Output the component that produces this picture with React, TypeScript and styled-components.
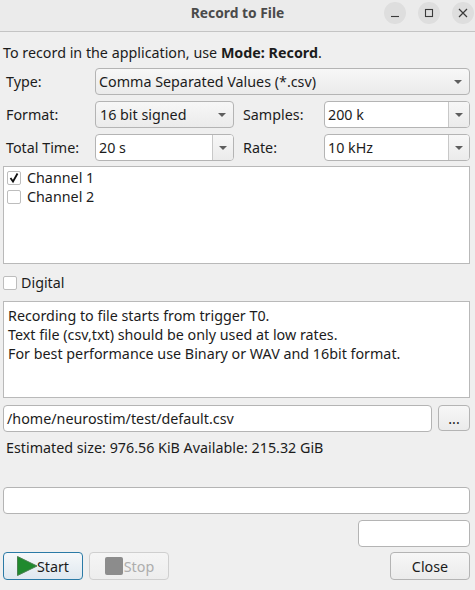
import React from 'react'
import styled, { createGlobalStyle } from 'styled-components'

const Global = createGlobalStyle`
  html, body { margin: 0; padding: 0; background: #efefef; }
  body {
    font-family: "Noto Sans", "DejaVu Sans", sans-serif;
    font-size: 14.3px;
    color: #1c1c1c;
  }
`

const Window = styled.div`
  width: 475px;
  height: 590px;
  overflow: hidden;
  background: #efefef;
`

const TitleBar = styled.header`
  height: 29px;
  border-bottom: 1px solid #c4c4c4;
  background: #ebebeb;
  display: flex;
  align-items: flex-start;
  justify-content: flex-end;
  gap: 12px;
  padding: 2px 1px 0 0;
  position: relative;
`

const Title = styled.div`
  position: absolute;
  left: 0;
  right: 0;
  top: 4px;
  text-align: center;
  font-weight: 700;
  font-size: 13.8px;
  line-height: 18px;
  color: #4a4a4a;
`

const WinButton = styled.div`
  width: 22px;
  height: 22px;
  border-radius: 50%;
  background: #dedede;
  display: flex;
  align-items: center;
  justify-content: center;
`

const Body = styled.main`
  display: flex;
  flex-direction: column;
  padding: 0 5px 0 3px;
`

const Intro = styled.div`
  height: 36px;
  line-height: 42px;
  white-space: nowrap;
`

const Rows = styled.div`
  display: grid;
  grid-template-columns: 89px 139px 90px 146px;
  grid-auto-rows: 27px;
  row-gap: 6px;
  align-items: stretch;
  padding-left: 3px;
`

const Label = styled.label<{ $indent?: number }>`
  display: flex;
  align-items: center;
  padding-left: ${p => p.$indent ?? 0}px;
`

const controlEdge = `
  box-sizing: border-box;
  border: 1px solid #b4b4b4;
  border-radius: 4px;
`

const Select = styled.div<{ $wide?: boolean }>`
  ${controlEdge}
  grid-column: ${p => (p.$wide ? 'span 3' : 'auto')};
  background: linear-gradient(#f7f7f7, #ebebeb);
  display: flex;
  align-items: center;
  justify-content: space-between;
  padding: 0 7px 0 ${p => (p.$wide ? 3 : 4)}px;
`

const Combo = styled.div`
  ${controlEdge}
  background: #fff;
  display: flex;
  align-items: center;
  justify-content: space-between;
  padding-left: 3px;
`

const ComboArrow = styled.div`
  width: 20px;
  align-self: stretch;
  border-left: 1px solid #c8c8c8;
  border-radius: 0 3px 3px 0;
  background: linear-gradient(#f7f7f7, #ebebeb);
  display: flex;
  align-items: center;
  justify-content: center;
`

const Arrow = styled.span`
  width: 0;
  height: 0;
  border-left: 4px solid transparent;
  border-right: 4px solid transparent;
  border-top: 4px solid #5e5e5e;
`

const ChannelList = styled.div`
  box-sizing: border-box;
  height: 98px;
  margin-top: 5px;
  border: 1px solid #b9b9b9;
  background: #fff;
  padding: 1px 3px;
`

const Channel = styled.div`
  display: flex;
  align-items: center;
  gap: 6px;
  height: 19px;
`

const Box = styled.span`
  box-sizing: border-box;
  width: 14px;
  height: 14px;
  border: 1px solid #bdbdbd;
  border-radius: 2px;
  background: #fff;
  display: flex;
  align-items: center;
  justify-content: center;
`

const DigitalRow = styled.div`
  display: flex;
  align-items: center;
  gap: 4px;
  height: 37px;
`

const Notes = styled.div`
  box-sizing: border-box;
  height: 97px;
  border: 1px solid #b9b9b9;
  background: #fff;
  padding: 4px;
  line-height: 19px;
`

const PathRow = styled.div`
  display: flex;
  justify-content: space-between;
  margin-top: 7px;
`

const TextInput = styled.div<{ $width?: number }>`
  ${controlEdge}
  width: ${p => (p.$width ? `${p.$width}px` : '100%')};
  height: 27px;
  background: #fff;
  line-height: 25px;
  padding-left: 3px;
  white-space: nowrap;
`

const SmallButton = styled.div`
  ${controlEdge}
  width: 32px;
  height: 26px;
  background: linear-gradient(#f7f7f7, #ebebeb);
  text-align: center;
  line-height: 25px;
`

const Estimate = styled.div`
  height: 55px;
  line-height: 32px;
  padding-left: 3px;
`

const RightAligned = styled.div`
  display: flex;
  justify-content: flex-end;
  margin-top: 6px;
`

const Footer = styled.footer`
  display: flex;
  align-items: center;
  gap: 6px;
  margin-top: 5px;
`

const Button = styled.div<{ $focus?: boolean; $off?: boolean }>`
  ${controlEdge}
  width: 80px;
  height: 28px;
  display: flex;
  align-items: center;
  justify-content: center;
  border-color: ${p => (p.$focus ? '#2a7aa6' : p.$off ? '#cfcfcf' : '#b4b4b4')};
  background: ${p =>
    p.$focus
      ? 'linear-gradient(#f6f8fa, #dfe8ef)'
      : p.$off
        ? 'linear-gradient(#f5f5f5, #ededed)'
        : 'linear-gradient(#f7f7f7, #ebebeb)'};
  color: ${p => (p.$off ? '#adadad' : 'inherit')};
`

const Spacer = styled.div`
  flex: 1;
`

export default function App() {
  return (
    <Window>
      <Global />
      <TitleBar>
        <Title>Record to File</Title>
        <WinButton>
          <svg width="10" height="10" viewBox="0 0 10 10">
            <path d="M1 8.5h8" stroke="#3a3a3a" strokeWidth="1.1" />
          </svg>
        </WinButton>
        <WinButton>
          <svg width="10" height="10" viewBox="0 0 10 10">
            <rect x="1.5" y="1.5" width="7" height="7" fill="none" stroke="#3a3a3a" strokeWidth="1.1" />
          </svg>
        </WinButton>
        <WinButton>
          <svg width="10" height="10" viewBox="0 0 10 10">
            <path d="M1 1l8 8M9 1l-8 8" stroke="#3a3a3a" strokeWidth="1.2" />
          </svg>
        </WinButton>
      </TitleBar>
      <Body>
        <Intro>
          To record in the application, use <b>Mode: Record</b>.
        </Intro>
        <Rows>
          <Label>Type:</Label>
          <Select $wide>
            <span>Comma Separated Values (*.csv)</span>
            <Arrow />
          </Select>
          <Label>Format:</Label>
          <Select>
            <span>16 bit signed</span>
            <Arrow />
          </Select>
          <Label $indent={9}>Samples:</Label>
          <Combo>
            <span>200 k</span>
            <ComboArrow><Arrow /></ComboArrow>
          </Combo>
          <Label>Total Time:</Label>
          <Combo>
            <span>20 s</span>
            <ComboArrow><Arrow /></ComboArrow>
          </Combo>
          <Label $indent={9}>Rate:</Label>
          <Combo>
            <span>10 kHz</span>
            <ComboArrow><Arrow /></ComboArrow>
          </Combo>
        </Rows>
        <ChannelList>
          <Channel>
            <Box>
              <svg width="12" height="12" viewBox="0 0 12 12">
                <path d="M2.5 6l2.5 3.5L9.5 1.5" fill="none" stroke="#111" strokeWidth="1.8" />
              </svg>
            </Box>
            Channel 1
          </Channel>
          <Channel>
            <Box />
            Channel 2
          </Channel>
        </ChannelList>
        <DigitalRow>
          <Box />
          Digital
        </DigitalRow>
        <Notes>
          Recording to file starts from trigger T0.
          <br />
          Text file (csv,txt) should be only used at low rates.
          <br />
          For best performance use Binary or WAV and 16bit format.
        </Notes>
        <PathRow>
          <TextInput $width={429}>/home/neurostim/test/default.csv</TextInput>
          <SmallButton>...</SmallButton>
        </PathRow>
        <Estimate>Estimated size: 976.56 KiB Available: 215.32 GiB</Estimate>
        <TextInput />
        <RightAligned>
          <TextInput $width={112} />
        </RightAligned>
        <Footer>
          <Button $focus>
            <svg width="20" height="20" viewBox="0 0 20 20">
              <path d="M0.5 0.5L20 10 0.5 19.5z" fill="#1f8a2e" stroke="#4a7f50" strokeWidth="1" />
            </svg>
            Start
          </Button>
          <Button $off>
            <svg width="20" height="20" viewBox="0 0 20 20">
              <rect x="1" y="1" width="18" height="18" rx="2" fill="#8c8c8c" />
            </svg>
            Stop
          </Button>
          <Spacer />
          <Button>Close</Button>
        </Footer>
      </Body>
    </Window>
  )
}
